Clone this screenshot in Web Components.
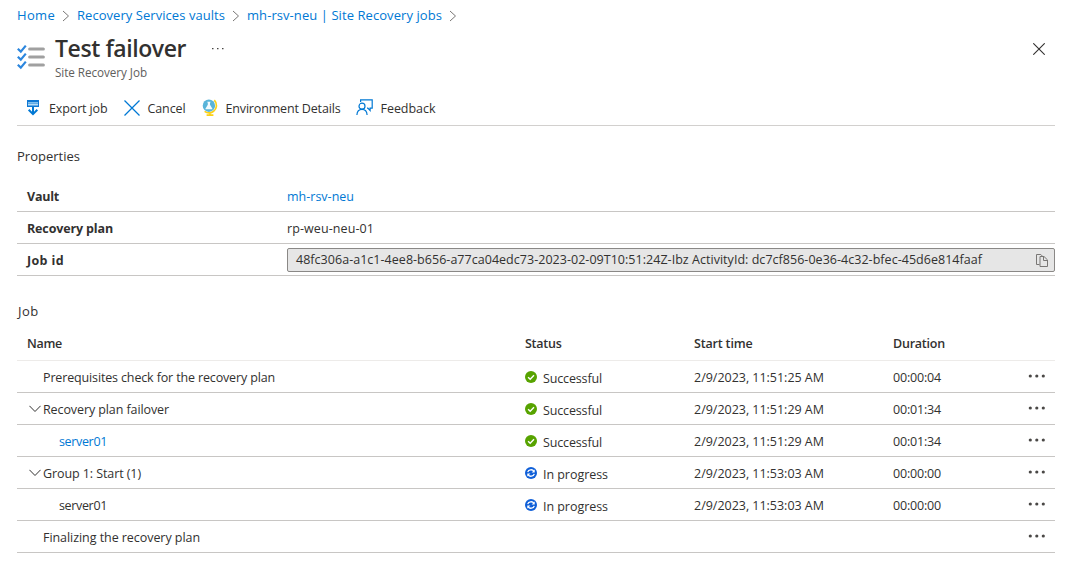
<!DOCTYPE html>
<html lang="en"><head><meta charset="utf-8"><title>Test failover</title>
<style>html,body{margin:0;background:#fff}body{font:12.5px/20px "Open Sans","Noto Sans",sans-serif;color:#323130}</style></head>
<body><job-page></job-page>
<script>
const define=(name,html,after)=>customElements.define(name,class extends HTMLElement{
  connectedCallback(){
    if(this.shadowRoot)return;
    const t=document.createElement('template');
    t.innerHTML=typeof html==='function'?html(this):html;
    this.attachShadow({mode:'open'}).append(t.content.cloneNode(true));
    if(after)after(this);
  }
});

/* Label whose tracking is adjusted to fill the width given in "w". */
define('fit-text','<style>:host{display:inline-block;width:max-content;white-space:pre;flex:none;padding-top:2px}:host([link]){color:#0078d4}</style><slot></slot>',el=>{
  const n=el.textContent.length,w=+el.getAttribute('w');
  const natural=el.getBoundingClientRect().width;
  if(w&&n)el.style.letterSpacing=((w-natural)/n).toFixed(3)+'px';
});

const icons={
  chevron:[8,12,'<path d="M1 1l5.5 5L1 11" fill="none" stroke="#797775"/>'],
  down:[12,8,'<path d="M.4.8L6 6.5 11.6.8" fill="none" stroke="#323130" stroke-width="1"/>'],
  list:[28,26,'<g fill="none" stroke="#2b86de" stroke-width="2.2"><path d="M.8 4.8l3 2.8L8.8 1.6M.8 12.8l3 2.8 5-6M.8 20.8l3 2.8 5-6"/></g><path d="M12.6 5H26.4M12.6 13H26.4M12.6 21H26.4" stroke="#a0a0a0" stroke-width="3" stroke-linecap="round"/>'],
  export:[16,16,'<path d="M2 0h12v7H2z" fill="#0f78d4"/><path d="M3 2.5h10" stroke="#7fc0ee"/><path d="M3 4.5h10" stroke="#b5dcf6" stroke-width="2"/><path d="M8 7v7M3.7 9.8L8 14.1l4.3-4.3" fill="none" stroke="#0078d4" stroke-width="2"/>'],
  cancel:[16,16,'<path d="M.5.5l15 15M15.5.5l-15 15" fill="none" stroke="#0078d4" stroke-width="1.25"/>'],
  globe:[16,18,'<path d="M12.3 1.2C15.6 4.4 15 9.8 11.6 12.2 8.6 14.3 5 14.1 2.6 12.4M8 14v2M4.6 16.1h6.8" fill="none" stroke="#fcd116" stroke-width="1.7"/><circle cx="6.9" cy="6.7" r="6.2" fill="#59b4d9"/><path d="M5.3 2.7h3.2v.9h-.5v2.1l2.4 4q.2.6-.5.6h-6q-.7 0-.5-.6l2.4-4V3.6h-.5z" fill="#f2fafd"/>'],
  feedback:[17,17,'<g fill="none" stroke="#0078d4" stroke-width="1.2"><path d="M4.6 3V.9h11.6v8.3h-2.1v2.3l-2.3-2.3h-.8"/><circle cx="6" cy="7.2" r="3"/><path d="M.9 16c.2-3.6 2.2-5.6 5.1-5.6s4.9 2 5.1 5.6"/></g>'],
  close:[12,12,'<path d="M.3.3l11.4 11.4M11.7.3L.3 11.7" stroke="#323130" stroke-width="1.1"/>'],
  copy:[12,13,'<g fill="none" stroke="#797775"><path d="M3.5 10.5h-3V.5h4.3l1.5 1.5M4 2.5h4l3.5 3.4v6.6H4zM7.5 2.8v3.7h3.7"/></g>'],
  ok:[12,12,'<circle cx="6" cy="6" r="6" fill="#57a300"/><path d="M3.1 6.2l2.1 2.1 3.8-4" fill="none" stroke="#fff" stroke-width="1.4"/>'],
  sync:[12,12,'<circle cx="6" cy="6" r="6" fill="#0f5fd8"/><path d="M2.7 5.1C3.5 2.4 7.4 1.9 9 4.3M9.3 6.9C8.5 9.6 4.6 10.1 3 7.7" fill="none" stroke="#fff" stroke-width="1.3"/><path d="M9.7 2.5v2.9H6.6zM2.3 9.5V6.6h3.1z" fill="#fff"/>'],
  more:[18,4,'<g fill="#4a4846"><circle cx="2.3" cy="2" r="1.6"/><circle cx="8.8" cy="2" r="1.6"/><circle cx="15.3" cy="2" r="1.6"/></g>'],
  dots:[12,2,'<path d="M0 .5h1.5M5 .5h1.5M10 .5h1.5" stroke="#484644" stroke-width="1.3"/>']
};
define('az-icon',el=>{const [w,h,p]=icons[el.getAttribute('name')];
  return `<style>:host{display:block;flex:none;width:${w}px;height:${h}px}svg{display:block}</style><svg width="${w}" height="${h}" viewBox="0 0 ${w} ${h}">${p}</svg>`});

define('bread-crumbs',`<style>:host{display:flex;align-items:center;height:30px;font-size:13px}az-icon{margin:1px 7px 0}fit-text{padding:0}</style>
<fit-text w="38" link>Home</fit-text><az-icon name="chevron"></az-icon><fit-text w="148" link>Recovery Services vaults</fit-text><az-icon name="chevron"></az-icon><fit-text w="195" link>mh-rsv-neu | Site Recovery jobs</fit-text><az-icon name="chevron"></az-icon>`);

define('blade-header',`<style>:host{display:flex;height:60px;align-items:flex-start}fit-text{padding:0}
.list{margin-top:14px}.names{display:flex;flex-direction:column;margin-left:10px}
.title{font-size:23px;line-height:30px;font-weight:600;margin-top:3px}.sub{font-size:11.7px;line-height:16px;color:#605e5c;margin-top:1px}
.dots{margin:18px 0 0 26px}.close{margin:13px 10px 0 auto}</style>
<az-icon class="list" name="list"></az-icon><div class="names"><fit-text class="title" w="131">Test failover</fit-text><fit-text class="sub" w="92">Site Recovery Job</fit-text></div><az-icon class="dots" name="dots"></az-icon><az-icon class="close" name="close"></az-icon>`);

define('command-item',el=>`<style>:host{display:flex;align-items:center}az-icon{margin-right:${el.getAttribute('gap')||8}px}</style><az-icon name="${el.getAttribute('icon')}"></az-icon><slot></slot>`);
define('command-bar',`<style>:host{display:flex;align-items:center;gap:16px;height:35px;padding-left:8px;border-bottom:1px solid #d2d0ce}</style>
<command-item icon="export"><fit-text w="58.5">Export job</fit-text></command-item>
<command-item icon="cancel"><fit-text w="38">Cancel</fit-text></command-item>
<command-item icon="globe"><fit-text w="115">Environment Details</fit-text></command-item>
<command-item icon="feedback" gap="7"><fit-text w="55">Feedback</fit-text></command-item>`);

define('prop-row',`<style>:host{display:grid;grid-template-columns:260px 1fr;align-items:center;height:31px;padding-left:10px;border-bottom:1px solid #c8c6c4}.k{font-weight:700}</style><div class="k"><slot name="key"></slot></div><slot></slot>`);
define('copy-field',`<style>:host{box-sizing:border-box;display:flex;justify-content:space-between;align-items:center;height:24px;padding:0 6px 0 8px;margin-top:1px;background:#e6e6e6;border:1px solid #8a8886;border-radius:2px;line-height:20px}</style><slot></slot><az-icon name="copy"></az-icon>`);

define('job-row',el=>{
  const a=n=>el.getAttribute(n),s=a('status'),good=s==='Successful';
  return `<style>:host{display:grid;grid-template-columns:508px 169px 199px 1fr;align-items:center;height:31px;border-bottom:1px solid #c8c6c4}
  .name,.status{display:flex;align-items:center}.name{padding-left:${a('indent')}px}.name az-icon{margin:0 2px 0 -14px}
  .status fit-text{margin:2px 0 0 6px}.last{display:flex;align-items:center}.more{margin:-2px 9px 0 auto}</style>
  <div class="name">${a('open')!==null?'<az-icon name="down"></az-icon>':''}<slot></slot></div>
  <div class="status">${s?`<az-icon name="${good?'ok':'sync'}"></az-icon><fit-text w="${good?59:65}">${s}</fit-text>`:''}</div>
  <div>${s?`<fit-text w="130">${a('start')}</fit-text>`:''}</div>
  <div class="last">${s?`<fit-text w="48">${a('time')}</fit-text>`:''}<az-icon class="more" name="more"></az-icon></div>`});

define('job-head',`<style>:host{display:grid;grid-template-columns:498px 169px 199px 1fr;align-items:center;height:34px;padding-left:10px;border-bottom:1px solid #edebe9;font-weight:600}</style>
<div><fit-text w="35">Name</fit-text></div><div><fit-text w="36.5">Status</fit-text></div><div><fit-text w="58.5">Start time</fit-text></div><div><fit-text w="52">Duration</fit-text></div>`);

define('job-page',`<style>:host{display:block;box-sizing:border-box;width:1071px;height:573px;padding:0 16px 0 17px;overflow:hidden}
.h{display:block;height:20px;font-size:13px}.h fit-text{padding:0}.props{margin-top:20px}.table{margin-top:14px;margin-bottom:15px}.job{margin-top:25px;margin-bottom:5px;padding-left:1px}</style>
<bread-crumbs></bread-crumbs><blade-header></blade-header><command-bar></command-bar>
<div class="h props"><fit-text w="63">Properties</fit-text></div>
<section class="table">
<prop-row><fit-text slot="key" w="32">Vault</fit-text><fit-text w="67" link>mh-rsv-neu</fit-text></prop-row>
<prop-row><fit-text slot="key" w="86">Recovery plan</fit-text><fit-text w="87">rp-weu-neu-01</fit-text></prop-row>
<prop-row><fit-text slot="key" w="37">Job id</fit-text><copy-field><fit-text w="686" style="margin-top:-2px">48fc306a-a1c1-4ee8-b656-a77ca04edc73-2023-02-09T10:51:24Z-Ibz ActivityId: dc7cf856-0e36-4c32-bfec-45d6e814faaf</fit-text></copy-field></prop-row>
</section>
<div class="h job"><fit-text w="20.5">Job</fit-text></div>
<job-head></job-head>
<job-row indent="26" status="Successful" start="2/9/2023, 11:51:25 AM" time="00:00:04"><fit-text w="232">Prerequisites check for the recovery plan</fit-text></job-row>
<job-row indent="26" open status="Successful" start="2/9/2023, 11:51:29 AM" time="00:01:34"><fit-text w="126">Recovery plan failover</fit-text></job-row>
<job-row indent="42" status="Successful" start="2/9/2023, 11:51:29 AM" time="00:01:34"><fit-text w="48" link>server01</fit-text></job-row>
<job-row indent="26" open status="In progress" start="2/9/2023, 11:53:03 AM" time="00:00:00"><fit-text w="98">Group 1: Start (1)</fit-text></job-row>
<job-row indent="42" status="In progress" start="2/9/2023, 11:53:03 AM" time="00:00:00"><fit-text w="48">server01</fit-text></job-row>
<job-row indent="26"><fit-text w="157">Finalizing the recovery plan</fit-text></job-row>`);
</script></body></html>
